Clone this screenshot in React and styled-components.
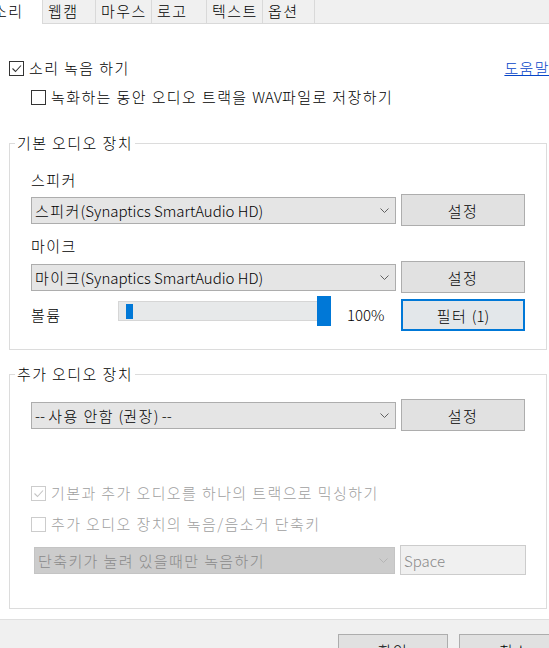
import React from 'react';
import styled, { createGlobalStyle } from 'styled-components';

const GlobalStyle = createGlobalStyle`
  html, body {
    margin: 0;
    padding: 0;
  }
  body {
    width: 549px;
    height: 648px;
    overflow: hidden;
    background: #f0f0f0;
    font-family: "Noto Sans CJK KR", "Noto Sans", sans-serif;
    font-size: 15px;
    font-weight: 300;
    letter-spacing: 1.4px;
    color: #000;
  }
`;

const tabs = [
  { label: '소리', width: 50, active: true },
  { label: '웹캠', width: 53 },
  { label: '마우스', width: 56 },
  { label: '로고', width: 55 },
  { label: '텍스트', width: 56 },
  { label: '옵션', width: 52 },
];

const Check = ({ checked, disabled }) => (
  <CheckBox disabled={disabled}>
    {checked && (
      <svg width="13" height="13" viewBox="0 0 13 13">
        <polyline
          points="2.5,6.5 5.5,9.5 11,3.5"
          fill="none"
          stroke={disabled ? '#c4c4c4' : '#333'}
          strokeWidth="1.1"
        />
      </svg>
    )}
  </CheckBox>
);

const Chevron = ({ disabled }) => (
  <ChevronIcon width="9" height="5" viewBox="0 0 9 5">
    <polyline
      points="0.5,0.5 4.5,4.5 8.5,0.5"
      fill="none"
      stroke={disabled ? '#b4b4b4' : '#606060'}
      strokeWidth="1"
    />
  </ChevronIcon>
);

const App = () => {
  return (
    <Window>
      <GlobalStyle />
      <TabStrip>
        {tabs.map(tab => (
          <Tab key={tab.label} width={tab.width} active={tab.active}>
            {tab.label}
          </Tab>
        ))}
      </TabStrip>

      <Panel>
        <HeaderRow>
          <CheckLabel>
            <Check checked />
            소리 녹음 하기
          </CheckLabel>
          <HelpLink>도움말</HelpLink>
        </HeaderRow>
        <SubOption>
          <CheckLabel>
            <Check />
            <span>
              녹화하는 동안 오디오 트랙을 <Latin>WAV</Latin>파일로 저장하기
            </span>
          </CheckLabel>
        </SubOption>

        <Group top={26}>
          <Legend>기본 오디오 장치</Legend>
          <GroupBody top={17} bottom={18}>
            <FieldLabel>스피커</FieldLabel>
            <DeviceRow gap={4}>
              <Select>
                <span>
                  스피커<Latin>(Synaptics SmartAudio HD)</Latin>
                </span>
                <Chevron />
              </Select>
              <Button>설정</Button>
            </DeviceRow>
            <FieldLabel gap={10}>마이크</FieldLabel>
            <DeviceRow gap={5}>
              <Select>
                <span>
                  마이크<Latin>(Synaptics SmartAudio HD)</Latin>
                </span>
                <Chevron />
              </Select>
              <Button>설정</Button>
            </DeviceRow>
            <VolumeRow>
              <VolumeLabel>볼륨</VolumeLabel>
              <Slider>
                <Track>
                  <TrackMark />
                </Track>
                <Thumb />
              </Slider>
              <Percent>100%</Percent>
              <Button primary>
                <span>
                  필터 <Latin>(1)</Latin>
                </span>
              </Button>
            </VolumeRow>
          </GroupBody>
        </Group>

        <Group top={14}>
          <Legend>추가 오디오 장치</Legend>
          <GroupBody top={15} bottom={33}>
            <DeviceRow gap={0}>
              <Select>
                <span>
                  <Latin>-- </Latin>사용 안함 <Latin>(</Latin>권장
                  <Latin>) --</Latin>
                </span>
                <Chevron />
              </Select>
              <Button>설정</Button>
            </DeviceRow>
            <OptionRow gap={52}>
              <CheckLabel disabled>
                <Check checked disabled />
                기본과 추가 오디오를 하나의 트랙으로 믹싱하기
              </CheckLabel>
            </OptionRow>
            <OptionRow gap={11}>
              <CheckLabel disabled>
                <Check disabled />
                추가 오디오 장치의 녹음/음소거 단축키
              </CheckLabel>
            </OptionRow>
            <HotkeyRow>
              <Select disabled>
                단축키가 눌려 있을때만 녹음하기
                <Chevron disabled />
              </Select>
              <KeyInput>Space</KeyInput>
            </HotkeyRow>
          </GroupBody>
        </Group>
      </Panel>

      <Footer>
        <FooterButton>확인</FooterButton>
        <FooterButton>취소</FooterButton>
      </Footer>
    </Window>
  );
};

export default App;

const Window = styled.div`
  width: 549px;
  height: 648px;
  display: flex;
  flex-direction: column;
  overflow: hidden;
`;

const Latin = styled.span`
  letter-spacing: 0;
`;

const TabStrip = styled.div`
  flex: none;
  display: flex;
  height: 23px;
  margin-left: -7px;
  position: relative;
  z-index: 1;
`;

const Tab = styled.div`
  box-sizing: border-box;
  width: ${props => props.width}px;
  height: ${props => (props.active ? 24 : 23)}px;
  padding-left: ${props => (props.active ? 0 : 5)}px;
  line-height: 22px;
  white-space: nowrap;
  background: ${props => (props.active ? '#fff' : '#f0f0f0')};
  border-right: 1px solid #d9d9d9;
  color: #000;
`;

const Panel = styled.div`
  flex: none;
  box-sizing: border-box;
  height: 596px;
  padding: 0 2px 0 9px;
  background: #fff;
  border-top: 1px solid #d9d9d9;
`;

const HeaderRow = styled.div`
  display: flex;
  justify-content: space-between;
  align-items: center;
  height: 20px;
  margin-top: 34px;
`;

const SubOption = styled.div`
  margin: 9px 0 0 22px;
  height: 20px;
  display: flex;
  align-items: center;
`;

const CheckLabel = styled.label`
  display: flex;
  align-items: center;
  gap: 5px;
  line-height: 20px;
  white-space: nowrap;
  color: ${props => (props.disabled ? '#a0a0a0' : '#000')};
`;

const CheckBox = styled.span`
  box-sizing: border-box;
  width: 15px;
  height: 15px;
  flex: none;
  display: flex;
  align-items: center;
  justify-content: center;
  background: #fff;
  border: 1px solid ${props => (props.disabled ? '#cccccc' : '#333')};
`;

const HelpLink = styled.a`
  color: #0645c8;
  text-decoration: underline;
  white-space: nowrap;
  margin-right: -3px;
  line-height: 20px;
  cursor: pointer;
`;

const Group = styled.fieldset`
  margin: ${props => props.top}px 0 0;
  padding: 0;
  min-width: 0;
  border: 1px solid #dcdcdc;
`;

const Legend = styled.legend`
  margin-left: 5px;
  padding: 0 2px;
  line-height: 20px;
  color: #000;
`;

const GroupBody = styled.div`
  padding: ${props => props.top}px 21px ${props => props.bottom}px;
  display: flex;
  flex-direction: column;
`;

const FieldLabel = styled.div`
  line-height: 20px;
  margin-top: ${props => props.gap || 0}px;
`;

const DeviceRow = styled.div`
  display: grid;
  grid-template-columns: 1fr 124px;
  column-gap: 5px;
  align-items: center;
  height: 32px;
  margin-top: ${props => props.gap}px;
`;

const Select = styled.div`
  box-sizing: border-box;
  height: 27px;
  display: flex;
  align-items: center;
  justify-content: space-between;
  padding: 0 6px 0 3px;
  white-space: nowrap;
  background: ${props => (props.disabled ? '#cccccc' : '#e5e5e5')};
  border: 1px solid ${props => (props.disabled ? '#c4c4c4' : '#adadad')};
  color: ${props => (props.disabled ? '#8a8a8a' : '#000')};
`;

const ChevronIcon = styled.svg`
  flex: none;
`;

const Button = styled.div`
  box-sizing: border-box;
  flex: none;
  width: 124px;
  height: 32px;
  display: flex;
  align-items: center;
  justify-content: center;
  background: ${props => (props.primary ? '#e3e7ea' : '#e1e1e1')};
  border: ${props =>
    props.primary ? '2px solid #0078d7' : '1px solid #adadad'};
  color: #000;
`;

const VolumeRow = styled.div`
  display: flex;
  align-items: center;
  height: 32px;
  margin-top: 6px;
`;

const VolumeLabel = styled.div`
  width: 87px;
  line-height: 20px;
`;

const Slider = styled.div`
  display: flex;
  align-items: center;
  height: 30px;
  align-self: flex-start;
  margin-top: -3px;
`;

const Track = styled.div`
  box-sizing: border-box;
  width: 200px;
  height: 20px;
  display: flex;
  align-items: center;
  padding-left: 7px;
  background: #e7e9ea;
  border: 1px solid #d6d6d6;
`;

const TrackMark = styled.div`
  width: 7px;
  height: 15px;
  background: #0078d7;
`;

const Thumb = styled.div`
  width: 14px;
  height: 30px;
  margin-left: -1px;
  background: #0078d7;
`;

const Percent = styled.div`
  flex: 1;
  margin-left: 16px;
  line-height: 20px;
  letter-spacing: 0;
  color: #000;
`;

const OptionRow = styled.div`
  height: 20px;
  display: flex;
  align-items: center;
  margin-top: ${props => props.gap}px;
`;

const HotkeyRow = styled.div`
  display: grid;
  grid-template-columns: 1fr 126px;
  column-gap: 5px;
  align-items: center;
  height: 30px;
  margin: 11px -1px 0 3px;
`;

const KeyInput = styled.div`
  box-sizing: border-box;
  height: 30px;
  display: flex;
  align-items: center;
  padding-left: 3px;
  letter-spacing: 0;
  background: #f0f0f0;
  border: 1px solid #cccccc;
  color: #8a8a8a;
`;

const Footer = styled.div`
  flex: none;
  display: flex;
  gap: 11px;
  padding: 14px 0 0 338px;
  background: #f0f0f0;
  border-top: 1px solid #dfdfdf;
`;

const FooterButton = styled.div`
  box-sizing: border-box;
  flex: none;
  width: 110px;
  height: 31px;
  display: flex;
  align-items: center;
  justify-content: center;
  padding-top: 2px;
  background: #e1e1e1;
  border: 1px solid #adadad;
`;
